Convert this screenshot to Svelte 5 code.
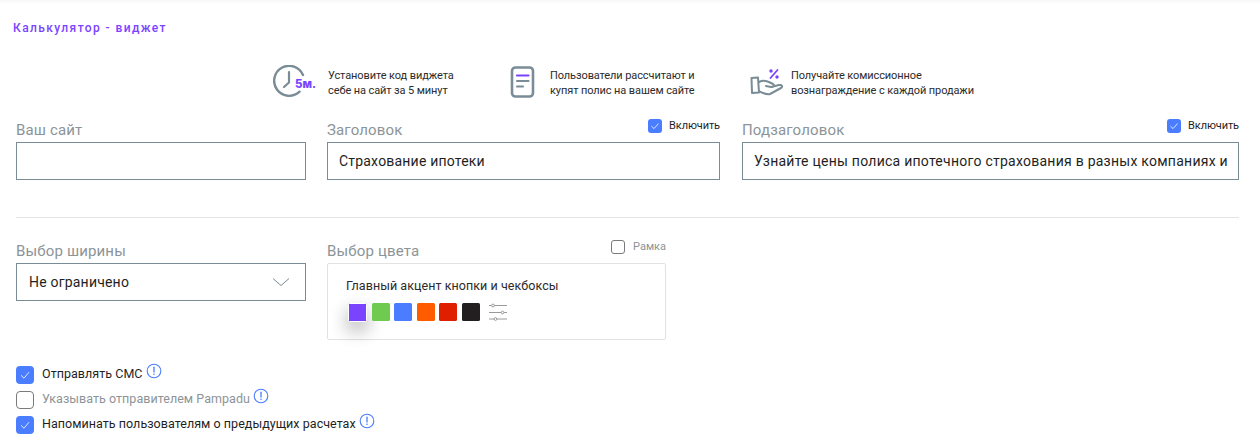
<script>
  const swatches = ['#7a44ff', '#6fcb50', '#4a7dff', '#ff5c00', '#e01e00', '#231f20'];
  const options = [
    { text: 'Отправлять СМС', on: true, muted: false },
    { text: 'Указывать отправителем Pampadu', on: false, muted: true },
    { text: 'Напоминать пользователям о предыдущих расчетах', on: true, muted: false }
  ];
</script>

<div class="page">
  <h1 class="title">Калькулятор - виджет</h1>

  <div class="features">
    <div class="feature f1">
      <svg class="ico" width="44" height="34" viewBox="0 0 44 34">
        <path d="M30 10A15 15 0 1 0 26.5 26.7" fill="none" stroke="#7a8c96" stroke-width="2.4" stroke-linecap="round"/>
        <path d="M16 7V17.5L11 22" fill="none" stroke="#7a8c96" stroke-width="2.2" stroke-linecap="round" stroke-linejoin="round"/>
        <text x="22" y="23" class="five">5м.</text>
      </svg>
      <p>Установите код виджета<br />себе на сайт за 5 минут</p>
    </div>
    <div class="feature f2">
      <svg class="ico" width="26" height="34" viewBox="0 0 26 34">
        <rect x="2" y="2.5" width="21" height="29" rx="3.5" fill="none" stroke="#7a8c96" stroke-width="2.6"/>
        <path d="M7 10.5H18.5" stroke="#7a44ff" stroke-width="2.2" stroke-linecap="round"/>
        <path d="M7 16H18.5" stroke="#7a8c96" stroke-width="2.2" stroke-linecap="round"/>
        <path d="M7 21.5H13" stroke="#7a8c96" stroke-width="2.2" stroke-linecap="round"/>
      </svg>
      <p>Пользователи рассчитают и<br />купят полис на вашем сайте</p>
    </div>
    <div class="feature f3">
      <svg class="ico" width="34" height="30" viewBox="0 0 34 30">
        <path d="M27.5 3L20.5 11" stroke="#7a44ff" stroke-width="1.8" stroke-linecap="round"/>
        <circle cx="21" cy="4" r="1.7" fill="#7a44ff"/>
        <circle cx="27" cy="10" r="1.7" fill="#7a44ff"/>
        <path d="M1.5 11L8 10.5L9 25.5L2 26Z" fill="none" stroke="#7a8c96" stroke-width="2" stroke-linejoin="round"/>
        <path d="M9 15C13 13 17 14 20 15.5L23 17C25 18.5 23.5 20.5 21 20L16 19M21 20L29 18C32 17.5 33 19.5 31 21L20 27C17 28 14 26.5 9.5 24.5" fill="none" stroke="#7a8c96" stroke-width="2" stroke-linecap="round" stroke-linejoin="round"/>
      </svg>
      <p>Получайте комиссионное<br />вознаграждение с каждой продажи</p>
    </div>
  </div>

  <div class="row fields">
    <div class="field">
      <div class="head"><span class="label">Ваш сайт</span></div>
      <div class="box"></div>
    </div>
    <div class="field">
      <div class="head">
        <span class="label">Заголовок</span>
        <span class="toggle">
          <span class="check on small"><svg viewBox="0 0 14 14" width="14" height="14"><path d="M3.5 7.2L6 9.6L10.5 4.6" /></svg></span>
          Включить
        </span>
      </div>
      <div class="box">Страхование ипотеки</div>
    </div>
    <div class="field">
      <div class="head">
        <span class="label">Подзаголовок</span>
        <span class="toggle">
          <span class="check on small"><svg viewBox="0 0 14 14" width="14" height="14"><path d="M3.5 7.2L6 9.6L10.5 4.6" /></svg></span>
          Включить
        </span>
      </div>
      <div class="box long">Узнайте цены полиса ипотечного страхования в разных компаниях и</div>
    </div>
  </div>

  <hr />

  <div class="row second">
    <div class="field">
      <div class="head"><span class="label">Выбор ширины</span></div>
      <div class="box select">
        Не ограничено
        <svg width="18" height="10" viewBox="0 0 18 10"><path d="M1 1.5L9 8.5L17 1.5" fill="none" stroke="#7a8c96" stroke-width="1" /></svg>
      </div>
    </div>
    <div class="field colour">
      <div class="head">
        <span class="label">Выбор цвета</span>
        <span class="toggle frame">
          <span class="check small"></span>
          Рамка
        </span>
      </div>
      <div class="palette">
        <div class="palette-title">Главный акцент кнопки и чекбоксы</div>
        <div class="swatches">
          {#each swatches as colour, i}
            <span class="swatch" class:active={i === 0} style:background={colour}></span>
          {/each}
          <svg class="sliders" width="18" height="18" viewBox="0 0 18 18">
            <g stroke="#9a9a9a" stroke-width="1" fill="#fff">
              <path d="M0 2.5H18M0 9.5H18M0 16H18" />
              <circle cx="4" cy="2.5" r="1.4" />
              <circle cx="13.5" cy="9.5" r="1.4" />
              <circle cx="6.5" cy="16" r="1.4" />
            </g>
          </svg>
        </div>
      </div>
    </div>
  </div>

  <div class="options">
    {#each options as o}
      <div class="option">
        <span class="check" class:on={o.on}>
          {#if o.on}<svg viewBox="0 0 18 18" width="18" height="18"><path d="M5 9.3L8 12.2L13 6.2" /></svg>{/if}
        </span>
        <span class="opt-text" class:muted={o.muted}>{o.text}</span>
        <svg class="info" width="16" height="16" viewBox="0 0 16 16">
          <circle cx="8" cy="8" r="6.8" fill="none" stroke="#4a7dff" stroke-width="1.1" />
          <path d="M8 4.2V9" stroke="#4a7dff" stroke-width="1.3" stroke-linecap="round" />
          <circle cx="8" cy="11.2" r="0.8" fill="#4a7dff" />
        </svg>
      </div>
    {/each}
  </div>
</div>

<style>
  :global(body) {
    margin: 0;
    background: #fff;
  }
  .page {
    width: 1260px;
    height: 447px;
    box-sizing: border-box;
    padding: 0 21px 0 16px;
    overflow: hidden;
    font-family: Roboto, "Liberation Sans", sans-serif;
    color: #1f1f1f;
    box-shadow: inset 0 4px 4px -3px rgba(0, 0, 0, 0.05);
  }
  .title {
    margin: 0 0 0 -3px;
    padding-top: 21px;
    font-size: 12px;
    line-height: 14px;
    font-weight: 500;
    letter-spacing: 1.4px;
    color: #7a44ff;
  }
  .features {
    display: flex;
    margin-top: 29px;
    padding-left: 257px;
    height: 36px;
    align-items: center;
  }
  .feature {
    display: flex;
    align-items: center;
  }
  .feature p {
    margin: 2px 0 0;
    font-size: 11px;
    line-height: 15px;
    letter-spacing: -0.1px;
    color: #2b2b2b;
  }
  .f1 { width: 237px; }
  .f1 .ico { margin-right: 11px; }
  .f2 { width: 240px; }
  .f2 .ico { margin-right: 14px; }
  .f3 .ico { margin-right: 7px; }
  .five {
    font-family: Inter, Roboto, sans-serif;
    font-size: 11.5px;
    font-weight: 800;
    fill: #7a44ff;
  }
  .row {
    display: grid;
    grid-template-columns: 290px 393px 498px;
    column-gap: 21px;
  }
  .row > :nth-child(3) {
    margin-left: 1px;
  }
  .fields {
    margin-top: 15px;
  }
  .head {
    display: flex;
    justify-content: space-between;
    align-items: flex-start;
    height: 27px;
  }
  .label {
    margin-top: 5px;
    font-size: 15px;
    line-height: 20px;
    color: #8c9498;
    letter-spacing: 0.15px;
  }
  .toggle {
    display: flex;
    align-items: center;
    gap: 7px;
    font-size: 11px;
    line-height: 14px;
    letter-spacing: -0.1px;
    color: #1f1f1f;
    margin-top: 4px;
  }
  .box {
    box-sizing: border-box;
    height: 38px;
    padding: 0 11px;
    border: 1px solid #7a8c96;
    font-size: 14px;
    line-height: 36px;
    letter-spacing: 0.2px;
    color: #1f1f1f;
  }
  .long {
    white-space: nowrap;
    letter-spacing: 0.25px;
  }
  hr {
    margin: 37px 0 0;
    border: 0;
    height: 1px;
    background: #e3e3e3;
  }
  .second {
    margin-top: 18px;
    grid-template-columns: 290px 339px;
  }
  .select {
    display: flex;
    align-items: center;
    justify-content: space-between;
    padding: 0 15px 0 12px;
  }
  .frame {
    color: #8c9498;
    margin-top: 4px;
    gap: 8px;
    letter-spacing: 0;
  }
  .palette {
    box-sizing: border-box;
    height: 77px;
    padding: 14px 18px;
    border: 1px solid #e2e2e2;
    border-radius: 2px;
  }
  .palette-title {
    font-size: 12.5px;
    line-height: 16px;
    letter-spacing: 0.06px;
    color: #2b2b2b;
  }
  .swatches {
    display: flex;
    align-items: flex-start;
    gap: 4.5px;
    margin-top: 9px;
    padding-left: 2px;
  }
  .swatch {
    width: 18px;
    height: 18px;
    border-radius: 1.5px;
  }
  .swatch.active {
    box-sizing: border-box;
    width: 19px;
    height: 19px;
    border: 1px solid #fff;
    box-shadow: 0 8px 16px 3px rgba(0, 0, 0, 0.2);
  }
  .sliders {
    margin-left: 5px;
  }
  .options {
    margin-top: 26px;
    display: flex;
    flex-direction: column;
    gap: 7px;
  }
  .option {
    display: flex;
    align-items: flex-start;
    height: 18px;
  }
  .opt-text {
    margin-left: 8px;
    font-size: 12.5px;
    line-height: 16px;
    letter-spacing: 0.04px;
    color: #1f1f1f;
  }
  .opt-text.muted {
    color: #8c9498;
  }
  .info {
    margin: -3px 0 0 3px;
  }
  .check {
    box-sizing: border-box;
    flex: none;
    display: inline-flex;
    width: 18px;
    height: 18px;
    border: 1px solid #7a7a7a;
    border-radius: 4px;
  }
  .check.small {
    width: 14px;
    height: 14px;
    border-radius: 3px;
  }
  .check.on {
    background: #4a7dff;
    border: 0;
  }
  .check path {
    fill: none;
    stroke: #dfe8ff;
    stroke-width: 1;
  }
</style>
